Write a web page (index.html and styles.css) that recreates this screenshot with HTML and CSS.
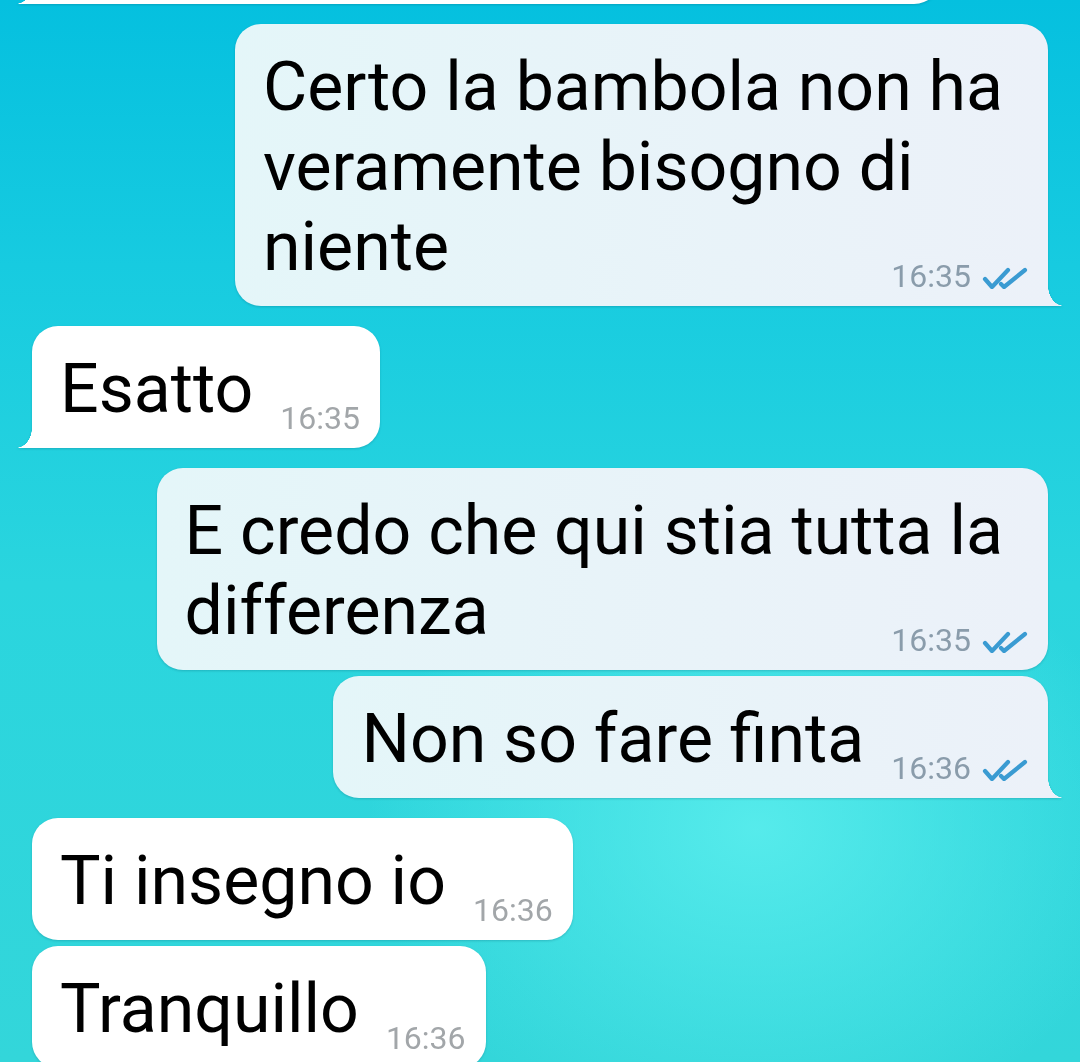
FILE: index.html
```html
<!DOCTYPE html>
<html lang="it">
<head>
  <meta charset="UTF-8">
  <meta name="viewport" content="width=device-width, initial-scale=1.0">
  <title>Chat</title>
  <link rel="stylesheet" href="styles.css">
</head>
<body>
  <main class="chat">
    <!-- previous message, mostly scrolled out of view -->
    <div class="bubble in tail partial"></div>

    <div class="bubble out tail multi gap">
      <p class="text">Certo la bambola non ha<br>veramente bisogno di<br>niente</p>
      <span class="meta">
        <span class="time">16:35</span>
        <svg class="check" viewBox="0 0 46 22" width="46" height="22"><path d="M3 12 L10 20 L26 3 M19 17 L22 20 L43 3"/></svg>
      </span>
    </div>

    <div class="bubble in tail gap">
      <p class="text">Esatto</p>
      <span class="meta"><span class="time">16:35</span></span>
    </div>

    <div class="bubble out multi gap">
      <p class="text">E credo che qui stia tutta la<br>differenza</p>
      <span class="meta">
        <span class="time">16:35</span>
        <svg class="check" viewBox="0 0 46 22" width="46" height="22"><path d="M3 12 L10 20 L26 3 M19 17 L22 20 L43 3"/></svg>
      </span>
    </div>

    <div class="bubble out tail tight">
      <p class="text">Non so fare finta</p>
      <span class="meta">
        <span class="time">16:36</span>
        <svg class="check" viewBox="0 0 46 22" width="46" height="22"><path d="M3 12 L10 20 L26 3 M19 17 L22 20 L43 3"/></svg>
      </span>
    </div>

    <div class="bubble in gap">
      <p class="text">Ti insegno io</p>
      <span class="meta"><span class="time">16:36</span></span>
    </div>

    <div class="bubble in tight">
      <p class="text">Tranquillo</p>
      <span class="meta"><span class="time">16:36</span></span>
    </div>
  </main>
</body>
</html>
```

FILE: styles.css
```css
html, body {
    margin: 0;
    padding: 0;
    height: 100%;
    overflow: hidden;
  }

  body {
    font-family: Roboto, "Noto Sans", Arial, sans-serif;
    background:
      radial-gradient(ellipse 520px 420px at 70% 78%, rgba(88, 236, 236, 0.95), rgba(88, 236, 236, 0) 75%),
      linear-gradient(to bottom, #05c0df 0%, #17cbe0 25%, #2ad5de 55%, #33d6da 100%);
  }

  .chat {
    display: flex;
    flex-direction: column;
    padding: 0 32px;
  }

  .bubble {
    position: relative;
    display: flex;
    align-items: flex-end;
    gap: 27px;
    width: fit-content;
    padding: 23px 20px 19px 28px;
    border-radius: 26px;
    filter: drop-shadow(0 1px 1px rgba(0, 80, 100, 0.25));
  }

  .bubble.gap {
    margin-top: 20px;
  }

  .bubble.tight {
    margin-top: 6px;
  }

  .bubble.in {
    align-self: flex-start;
    background: #fff;
  }

  .bubble.out {
    align-self: flex-end;
    background: linear-gradient(to right, #e4f6f9, #ecf1f9);
  }

  .bubble.partial {
    height: 80px;
    width: 908px;
    margin-top: -76px;
    padding: 0;
  }

  /* tails */
  .bubble.tail.out {
    border-bottom-right-radius: 0;
  }

  .bubble.tail.in {
    border-bottom-left-radius: 0;
  }

  .bubble.tail::after {
    content: "";
    position: absolute;
    bottom: 0;
    width: 16px;
    height: 20px;
  }

  .bubble.tail.out::after {
    right: -16px;
    background: radial-gradient(16px 20px at 100% 0, transparent 98%, #ecf1f9 100%);
  }

  .bubble.tail.in::after {
    left: -16px;
    background: radial-gradient(16px 20px at 0 0, transparent 98%, #fff 100%);
  }

  .text {
    margin: 0;
    font-size: 68px;
    line-height: 80px;
    color: #000;
  }

  /* multi-line: time sits in the bottom-right corner under the text */
  .bubble.multi {
    display: grid;
  }

  .bubble.multi > * {
    grid-area: 1 / 1;
  }

  .bubble.multi .text {
    padding-right: 25px;
  }

  .bubble.multi .meta {
    justify-self: end;
    align-self: end;
  }

  .meta {
    display: flex;
    align-items: flex-end;
    gap: 11px;
    margin-bottom: 1px;
    white-space: nowrap;
  }

  .time {
    font-size: 32px;
    line-height: 19px;
  }

  .in .time {
    color: #a2a6a9;
  }

  .out .time {
    color: #8a9cab;
  }

  .check {
    margin-bottom: -3px;
    fill: none;
    stroke: #3a9bd2;
    stroke-width: 4.2;
    stroke-linecap: round;
    stroke-linejoin: round;
  }
```
